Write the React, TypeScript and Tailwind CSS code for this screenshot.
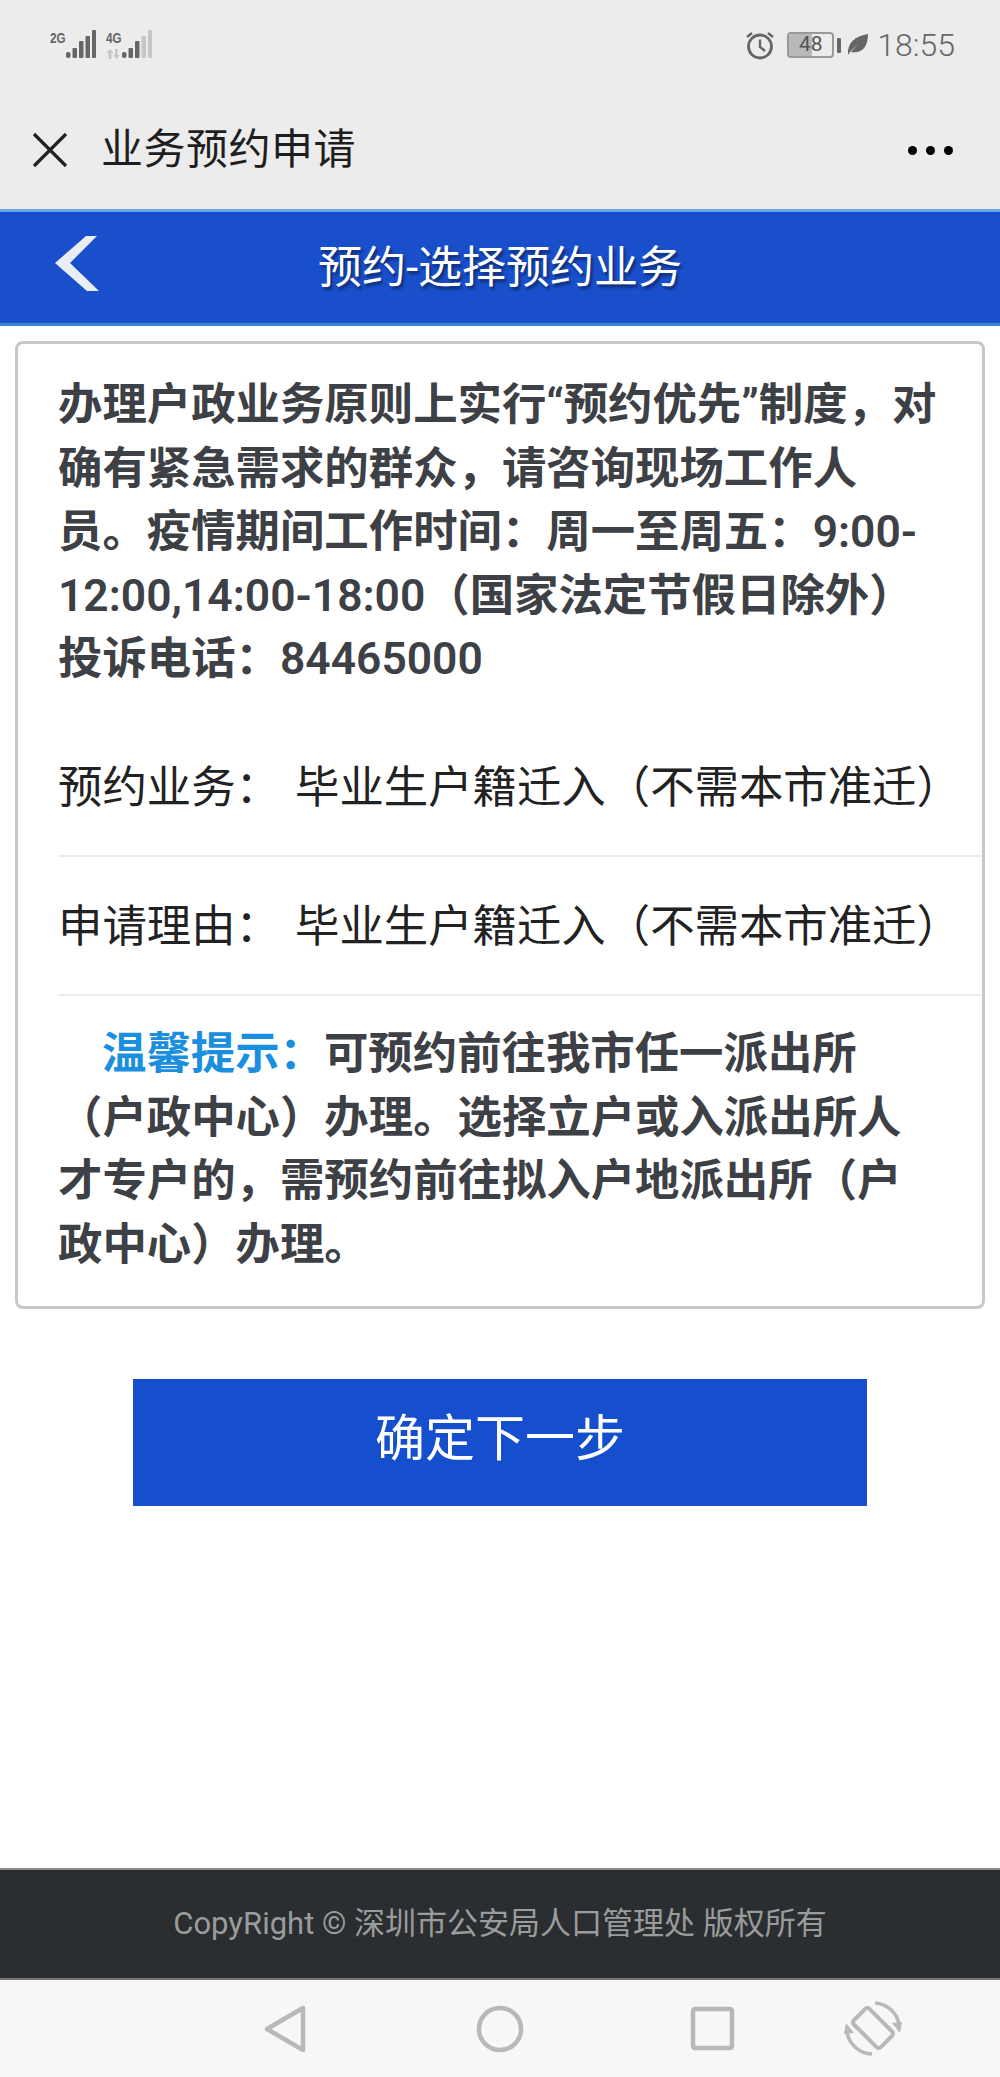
import React from "react";

const cjk = "font-['Roboto','Noto_Sans_CJK_SC',sans-serif]";

function Signal({ faded }: { faded?: boolean }) {
  const last = faded ? "#c6c6c6" : "#666666";
  return (
    <svg width="30" height="29" viewBox="0 0 30 29">
      <rect x="0" y="22" width="4.5" height="6" rx="2" fill="#666666" />
      <rect x="6.5" y="18" width="4.5" height="10" rx="1" fill="#666666" />
      <rect x="13" y="11" width="4.5" height="17" rx="1" fill="#666666" />
      <rect x="19.5" y="6" width="4.5" height="22" rx="1" fill={last} />
      <rect x="26" y="0" width="4" height="28" rx="1" fill={last} />
    </svg>
  );
}

function NetLabel({ label, arrows }: { label: string; arrows?: boolean }) {
  return (
    <div className="w-[16px] pt-[1px]">
      <div className="text-[15px] leading-[13px] font-bold text-[#666666] font-['Liberation_Sans',sans-serif] origin-left scale-x-[0.78] whitespace-nowrap">
        {label}
      </div>
      {arrows && (
        <svg width="15" height="10" viewBox="0 0 15 10" className="mt-[5px]" fill="#c6c6c6">
          <path d="M4 0l3.5 4H5.5v6h-3V4H.5z" />
          <path d="M9 0h2.500v6h2L10.500 10 7.500 6H9z" />
        </svg>
      )}
    </div>
  );
}

function StatusBar() {
  return (
    <div className="h-[105px] flex items-start justify-between pt-[30px] pl-[50px] pr-[45px]">
      <div className="flex gap-[10px]">
        <div className="flex">
          <NetLabel label="2G" />
          <Signal />
        </div>
        <div className="flex">
          <NetLabel label="4G" arrows />
          <Signal faded />
        </div>
      </div>
      <div className="flex items-center">
        <svg width="30" height="30" viewBox="0 0 30 30" fill="none" stroke="#666666" className="mr-[12px]">
          <circle cx="15" cy="16.500" r="11.500" strokeWidth="2.800" />
          <path d="M15 9.500v7.500l5 4" strokeWidth="2.400" />
          <path d="M2 7l5-4M28 7l-5-4" strokeWidth="2.400" />
        </svg>
        <div className="relative w-[47px] h-[26px] border-2 border-[#999999] rounded-[4px] overflow-hidden flex items-center justify-center text-[#555555] text-[21px] font-['Roboto',sans-serif]">
          <div className="absolute left-0 top-0 bottom-0 w-[23px] bg-[#b9b9b9]" />
          <span className="relative">48</span>
        </div>
        <div className="w-[4px] h-[15px] bg-[#666666] rounded-[1px] ml-[3px] mr-[6px]" />
        <svg width="22" height="22" viewBox="0 0 22 22" className="mr-[8px]">
          <path d="M1 21C0 9 8 2 21 0c0 13-6 20-17 18l8-9-9 9z" fill="#666666" />
        </svg>
        <span className="text-[32px] leading-[30px] text-[#666666] font-['Roboto',sans-serif] font-light">18:55</span>
      </div>
    </div>
  );
}

function TitleBar() {
  return (
    <div className="h-[104px] flex items-center justify-between pb-[14px] pl-[32px] pr-[47px]">
      <div className="flex items-center">
        <svg width="36" height="36" viewBox="0 0 36 36" stroke="#222222" strokeWidth="3.200">
          <path d="M2 2l32 32M34 2L2 34" />
        </svg>
        <span className={`ml-[33px] text-[42px] tracking-[0.5px] leading-[50px] text-[#1e1e1e] ${cjk}`}>业务预约申请</span>
      </div>
      <div className="flex gap-[9px]">
        <div className="w-[9px] h-[9px] rounded-full bg-black" />
        <div className="w-[9px] h-[9px] rounded-full bg-black" />
        <div className="w-[9px] h-[9px] rounded-full bg-black" />
      </div>
    </div>
  );
}

function BlueHeader() {
  return (
    <div className="relative h-[117px] bg-[#194fcb] border-t-[3px] border-b-[3px] border-t-[#6aa9e6] border-b-[#3a86d8] flex items-center justify-center">
      <svg width="44" height="55" viewBox="0 0 44 55" className="absolute left-[55px] top-[24px]">
        <path d="M42 0H31L0 27l32 28h12L15 27z" fill="#e9edf5" />
      </svg>
      <span className={`text-[44px] leading-[50px] text-white [text-shadow:2px_3px_3px_rgba(0,0,0,0.45)] ${cjk}`}>预约-选择预约业务</span>
    </div>
  );
}

function InfoRow({ label, value }: { label: string; value: string }) {
  return (
    <div className="h-[139px] pt-[4px] flex items-center border-b-2 border-[#ececec] text-[44.4px] leading-[64px] text-[#222222] font-normal whitespace-nowrap">
      <span className="w-[237px] shrink-0">{label}</span>
      <span>{value}</span>
    </div>
  );
}

function Card() {
  return (
    <div className={`mx-[15px] mt-[15px] h-[968px] border-[3px] border-[#c8c8c8] rounded-[8px] pl-[40px] pt-[30px] text-[#3d4045] ${cjk}`}>
      <p className="text-[44.4px] leading-[63.6px] font-semibold whitespace-nowrap">
        办理户政业务原则上实行“预约优先”制度，对
        <br />
        确有紧急需求的群众，请咨询现场工作人
        <br />
        员。疫情期间工作时间：周一至周五：9:00-
        <br />
        12:00,14:00-18:00（国家法定节假日除外）
        <br />
        投诉电话：84465000
      </p>
      <div className="mt-[26px]">
        <InfoRow label="预约业务：" value="毕业生户籍迁入（不需本市准迁）" />
        <InfoRow label="申请理由：" value="毕业生户籍迁入（不需本市准迁）" />
      </div>
      <p className="text-[44.4px] leading-[63.6px] font-semibold whitespace-nowrap mt-[27px]">
        <span className="pl-[44px] text-[#1a8fe0]">温馨提示：</span>可预约前往我市任一派出所
        <br />
        （户政中心）办理。选择立户或入派出所人
        <br />
        才专户的，需预约前往拟入户地派出所（户
        <br />
        政中心）办理。
      </p>
    </div>
  );
}

function NavBar() {
  return (
    <div className="h-[97px] bg-[#f7f7f7]">
      <svg width="1000" height="97" viewBox="0 0 1000 97" fill="none" stroke="#b8b8b8" strokeWidth="4.500" strokeLinejoin="round">
        <path d="M303 28v42l-36-21z" />
        <circle cx="500" cy="49" r="21" />
        <rect x="693" y="29" width="39" height="39" rx="2" />
        <rect x="862" y="29" width="22" height="38" rx="3" transform="rotate(-45 873 48)" strokeWidth="4" />
        <path d="M875 23a26 26 0 0 1 24 21M872 74a26 26 0 0 1-25-22" strokeWidth="3.500" />
        <path d="M892 43l10-1-2 11zM854 53l-10 1 2-11z" fill="#b8b8b8" stroke="none" />
      </svg>
    </div>
  );
}

export default function App() {
  return (
    <div className="w-[1000px] h-[2077px] flex flex-col bg-white overflow-hidden">
      <div className="bg-[#ececec]">
        <StatusBar />
        <TitleBar />
      </div>
      <BlueHeader />
      <Card />
      <button className={`mt-[70px] mx-auto w-[734px] h-[127px] pb-[6px] bg-[#164fce] text-white text-[50px] ${cjk}`}>确定下一步</button>
      <div className="flex-1" />
      <div className="h-[112px] bg-[#2a2e30] border-t-2 border-b-2 border-t-[#8a8c8c] border-b-[#777777] flex items-center justify-center">
        <span className={`text-[31px] text-[#9a9c9c] ${cjk}`}>CopyRight © 深圳市公安局人口管理处 版权所有</span>
      </div>
      <NavBar />
    </div>
  );
}
